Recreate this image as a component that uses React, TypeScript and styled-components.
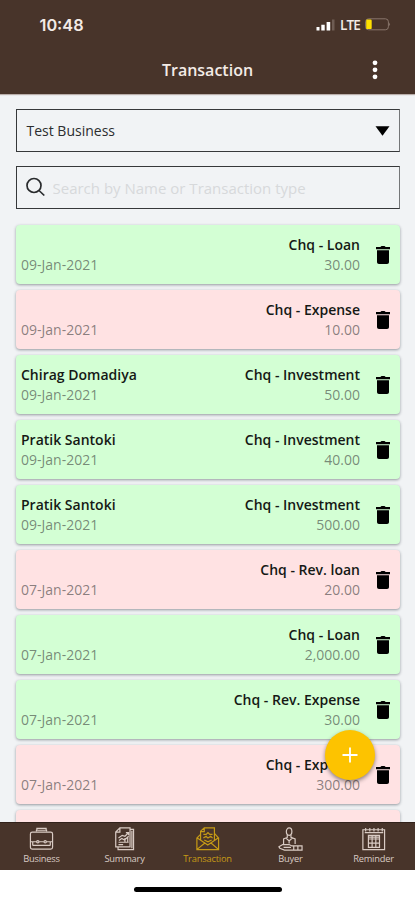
import React from "react";
import styled, { createGlobalStyle } from "styled-components";

const GlobalStyle = createGlobalStyle`
  * { box-sizing: border-box; }
  body { margin: 0; background: #fff; font-family: "Open Sans", "Noto Sans", sans-serif; }
`;

const Screen = styled.div`
  width: 415px;
  height: 900px;
  display: flex;
  flex-direction: column;
  overflow: hidden;
  background: #f1f3f5;
  position: relative;
`;

const Header = styled.header`
  height: 94px;
  flex: none;
  background: #48342a;
  color: #f3ebe6;
  box-shadow: 0 1px 1px #b9aeaa;
`;

const StatusBar = styled.div`
  height: 48px;
  padding: 1px 24px 0 39.5px;
  display: flex;
  align-items: center;
  justify-content: space-between;
`;

const Clock = styled.span`
  font: 600 16.3px/20px Inter, sans-serif;
`;

const StatusIcons = styled.div`
  display: flex;
  align-items: center;
  gap: 5px;
  font: 600 13.5px/18px "Open Sans", sans-serif;
  letter-spacing: -0.8px;
`;

const TitleBar = styled.div`
  height: 44px;
  display: grid;
  grid-template-columns: 1fr auto 1fr;
  align-items: center;
  padding: 0 37px;
`;

const Title = styled.h1`
  grid-column: 2;
  margin: 0;
  font-size: 16px;
  line-height: 22px;
  font-weight: 600;
`;

const MenuButton = styled.button`
  justify-self: end;
  border: 0;
  padding: 0;
  background: none;
  color: inherit;
  display: flex;
`;

const Content = styled.main`
  flex: 1;
  min-height: 0;
  overflow: hidden;
  padding: 15px 15px 0 15.5px;
`;

const Field = styled.div<{ $gap: number }>`
  height: 43px;
  margin-bottom: ${(p) => p.$gap}px;
  border: 1.5px solid #36383a;
  border-right-color: #747678;
  padding: 0 9px 0 10px;
  display: flex;
  align-items: center;
  color: #2c2d2f;
  font-size: 14px;
`;

const SelectText = styled.span`
  flex: 1;
`;

const SearchIcon = styled.svg`
  flex: none;
  margin: 0 7px 2px -1px;
`;

const SearchInput = styled.input`
  flex: 1;
  min-width: 0;
  padding: 0 0 0 1px;
  border: 0;
  background: none;
  outline: none;
  font: 400 15px/20px "Open Sans", sans-serif;
  &::placeholder { color: #d7d9db; opacity: 1; }
`;

const List = styled.div`
  display: flex;
  flex-direction: column;
  gap: 6px;
`;

const Card = styled.article<{ $income: boolean }>`
  height: 59px;
  flex: none;
  display: grid;
  grid-template-columns: 1fr auto 40px;
  padding-left: 5.5px;
  border-radius: 4px;
  background: ${(p) => (p.$income ? "#d3ffd4" : "#ffe2e3")};
  box-shadow: 0 1px 3px rgba(30, 40, 50, 0.45);
`;

const Lines = styled.div<{ $right?: boolean }>`
  display: flex;
  flex-direction: column;
  padding-top: 10px;
  text-align: ${(p) => (p.$right ? "right" : "left")};
`;

const Strong = styled.span`
  height: 20px;
  font-size: 14px;
  line-height: 20px;
  font-weight: 600;
  color: #151915;
`;

const Muted = styled.span`
  font-size: 14px;
  line-height: 19px;
  color: rgba(50, 50, 50, 0.58);
`;

const DeleteButton = styled.button`
  border: 0;
  padding: 0 0 0 5px;
  background: none;
  display: flex;
  align-items: center;
  justify-content: center;
  color: #000;
`;

const AddButton = styled.button`
  position: absolute;
  left: 325px;
  top: 730px;
  width: 50px;
  height: 50px;
  border: 0;
  padding: 0;
  border-radius: 50%;
  background: #fdc300;
  color: #fff;
  display: flex;
  align-items: center;
  justify-content: center;
  box-shadow: 0 2px 4px rgba(0, 0, 0, 0.45);
`;

const Nav = styled.nav`
  height: 48px;
  flex: none;
  display: grid;
  grid-template-columns: repeat(5, 1fr);
  background: #48342a;
  border-top: 1px solid #32221b;
`;

const Tab = styled.a<{ $active: boolean }>`
  display: flex;
  flex-direction: column;
  align-items: center;
  gap: 1px;
  padding-top: 4px;
  color: ${(p) => (p.$active ? "#c59a16" : "#d9cbc4")};
  font-size: 9.3px;
  line-height: 13px;
  letter-spacing: -0.2px;
`;

const HomeArea = styled.footer`
  height: 30px;
  flex: none;
  background: #fff;
  display: flex;
  justify-content: center;
  padding-top: 17px;
`;

const HomeBar = styled.div`
  width: 148px;
  height: 5px;
  border-radius: 3px;
  background: #000;
`;

const Signal = () => (
  <svg width="19" height="12" viewBox="0 0 19 12">
    <path d="M.5 8h3v3.5h-3zM5.3 5.7h3.4v5.8H5.3zM10.6 3h3.6v8.5h-3.6z" fill="#fff" />
    <path d="M16 .5h2.5v11H16z" fill="#6e5c53" />
  </svg>
);

const Battery = () => (
  <svg width="26" height="13" viewBox="0 0 26 13">
    <rect x=".6" y=".8" width="22.8" height="11" rx="3" fill="none" stroke="#89766b" />
    <rect x="1.2" y="1.6" width="5.5" height="9.5" rx="1.2" fill="#ffe000" />
    <path d="M24.3 4.5q1.6 1.8 0 3.7z" fill="#9d8b80" />
  </svg>
);

const Trash = () => (
  <svg width="16" height="20" viewBox="0 0 16 20">
    <path d="M1 2h4.3L6.5.9h3L10.7 2H15v2.2H1zM2 5.2h12v12Q14 19 12 19H4q-2 0-2-1.8z" fill="currentColor" />
  </svg>
);

const tabIcons: Record<string, React.ReactNode> = {
  Business: (
    <>
      <rect x="1.5" y="5.5" width="24" height="18.5" rx="2" />
      <path d="M8 5V3.5h11V5M8.5 3V1.5h10V3M2 16h6M11 16h5M19 16h6M4 16.5v3.5M23 16.5v3.5M4 20h19" />
      <circle cx="9.5" cy="16" r="1.3" />
      <circle cx="17.5" cy="16" r="1.3" />
    </>
  ),
  Summary: (
    <>
      <path d="M8.5 1h11v20.5H4V5.5zM8.5 1v4.5H4M20 2.5h3.3V24.5H6.5V22M21.5 4v19" />
      <path d="M7 12l4-3 3 1 4-4M7.5 14.5l3-2 3 1.5 4.5-4M7 16.5h11M7 19h5M15 6h3v3M14 12v4M17 11v5" />
    </>
  ),
  Transaction: (
    <>
      <path d="M6 8l-4 4v12.5h23.5V12L21 7M6 14V4.5L10 1h11v13M10 1v4H6M2.5 12l11.3 7.5L25 12M2.5 24l8.5-7M25 24l-8-7" />
      <path d="M9 8h3l2-2 2 2h3M9 12l3-2 2 2 3-2 2 2M10 14l4 2 4-2" />
    </>
  ),
  Buyer: (
    <>
      <ellipse cx="12" cy="5" rx="3" ry="4" />
      <path d="M10 8.8v2.5L6 13v5.5M14 8.8v2.5l4.5 1.7v5.5M8.5 12l3.5 3 3.5-3M12 15v3" />
      <path d="M1 21.5l4-2.5h7l3 1.5h11V25H7L2 23zM6 22h8M17 21v3.5M21.5 21v3.5" />
    </>
  ),
  Reminder: (
    <>
      <path d="M2 3h23.5v21.5H2zM4 6h20M5 1v4M9.5 1v4M14 1v4M18.5 1v4M23 1v4" />
      <path d="M8 9h12v13H8zM8 13h12M8 17.5h12M12 9v13M16 9v13M8 11h12" />
    </>
  ),
};

const transactions = [
  { name: "", date: "09-Jan-2021", type: "Chq - Loan", amount: "30.00", income: true },
  { name: "", date: "09-Jan-2021", type: "Chq - Expense", amount: "10.00", income: false },
  { name: "Chirag Domadiya", date: "09-Jan-2021", type: "Chq - Investment", amount: "50.00", income: true },
  { name: "Pratik Santoki", date: "09-Jan-2021", type: "Chq - Investment", amount: "40.00", income: true },
  { name: "Pratik Santoki", date: "09-Jan-2021", type: "Chq - Investment", amount: "500.00", income: true },
  { name: "", date: "07-Jan-2021", type: "Chq - Rev. loan", amount: "20.00", income: false },
  { name: "", date: "07-Jan-2021", type: "Chq - Loan", amount: "2,000.00", income: true },
  { name: "", date: "07-Jan-2021", type: "Chq - Rev. Expense", amount: "30.00", income: true },
  { name: "", date: "07-Jan-2021", type: "Chq - Expense", amount: "300.00", income: false },
];

export default function App() {
  return (
    <>
      <GlobalStyle />
      <Screen>
        <Header>
          <StatusBar>
            <Clock>10:48</Clock>
            <StatusIcons>
              <Signal />
              <span>LTE</span>
              <Battery />
            </StatusIcons>
          </StatusBar>
          <TitleBar>
            <Title>Transaction</Title>
            <MenuButton aria-label="Menu">
              <svg width="6" height="20" viewBox="0 0 6 20" fill="#fff">
                <circle cx="3" cy="2.8" r="2.4" />
                <circle cx="3" cy="9.8" r="2.4" />
                <circle cx="3" cy="16.8" r="2.4" />
              </svg>
            </MenuButton>
          </TitleBar>
        </Header>
        <Content>
          <Field $gap={14}>
            <SelectText>Test Business</SelectText>
            <svg width="15" height="10" viewBox="0 0 15 10">
              <path d="M.5.3h14L7.5 9.7z" />
            </svg>
          </Field>
          <Field $gap={16}>
            <SearchIcon width="19" height="20" viewBox="0 0 19 20" fill="none" stroke="#292b2d" strokeWidth="1.7">
              <circle cx="8" cy="8.5" r="7" />
              <path d="M13 13.5l5.3 5" />
            </SearchIcon>
            <SearchInput placeholder="Search by Name or Transaction type" />
          </Field>
          <List>
            {transactions.map((t, i) => (
              <Card key={i} $income={t.income}>
                <Lines>
                  <Strong>{t.name}</Strong>
                  <Muted>{t.date}</Muted>
                </Lines>
                <Lines $right>
                  <Strong>{t.type}</Strong>
                  <Muted>{t.amount}</Muted>
                </Lines>
                <DeleteButton aria-label="Delete">
                  <Trash />
                </DeleteButton>
              </Card>
            ))}
            <Card $income={false} />
          </List>
        </Content>
        <Nav>
          {Object.keys(tabIcons).map((label) => (
            <Tab key={label} $active={label === "Transaction"}>
              <svg width="27" height="24" viewBox="0 0 27 26" fill="none" stroke="currentColor" strokeWidth="1.3">
                {tabIcons[label]}
              </svg>
              {label}
            </Tab>
          ))}
        </Nav>
        <HomeArea>
          <HomeBar />
        </HomeArea>
        <AddButton aria-label="Add">
          <svg width="16" height="16" viewBox="0 0 16 16" stroke="currentColor" strokeWidth="1.8">
            <path d="M8 .5v15M.5 8h15" />
          </svg>
        </AddButton>
      </Screen>
    </>
  );
}
